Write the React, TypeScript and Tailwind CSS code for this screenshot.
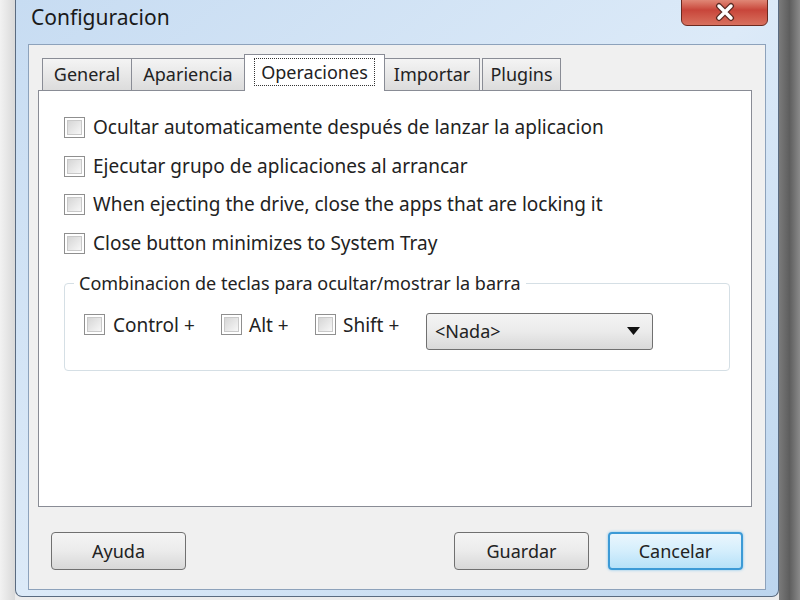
import React from "react";

const font = { fontFamily: '"Noto Sans", "Open Sans", Arial, sans-serif' };

function Check() {
  return (
    <span className="box-border inline-flex h-[21px] w-[21px] shrink-0 items-center justify-center border border-[#8f8f8f] bg-white">
      <span className="h-[15px] w-[15px] border border-[#c9c9c9] bg-gradient-to-br from-[#d6d6d6] to-[#f7f7f7]" />
    </span>
  );
}

function Row({ label }: { label: string }) {
  return (
    <div className="flex h-[38.7px] items-center gap-[8px]">
      <Check />
      <span className="text-[19px] text-[#222]">{label}</span>
    </div>
  );
}

function Btn({ label, focus }: { label: string; focus?: boolean }) {
  return (
    <div
      className={
        focus
          ? "flex h-[38px] w-[135px] items-center justify-center rounded-[4px] border-2 border-[#3c9ad6] bg-gradient-to-b from-[#eaf6fd] via-[#d4eefc] to-[#b6e1f8] text-[18px] text-[#222] shadow-[0_0_3px_#7ec3ee]"
          : "flex h-[38px] w-[135px] items-center justify-center rounded-[4px] border border-[#707070] bg-gradient-to-b from-[#f4f4f4] via-[#ebebeb] to-[#d8d8d8] text-[18px] text-[#222]"
      }
    >
      {label}
    </div>
  );
}

function Tab({ label, w }: { label: string; w: string }) {
  return (
    <div
      className={`${w} flex h-[32px] items-center justify-center border border-b-0 border-[#898c95] bg-gradient-to-b from-[#f4f4f4] to-[#dcdcdc] text-[18px] text-[#222]`}
    >
      {label}
    </div>
  );
}

export default function App() {
  return (
    <div className="flex h-[600px] w-[800px] overflow-hidden bg-[#ececec]" style={font}>
      <div className="w-[15px] shrink-0 bg-gradient-to-r from-[#f2f2f2] to-[#d9d9d9]" />
      <div className="relative flex h-[597px] w-[764px] shrink-0 flex-col rounded-b-[7px] border border-t-0 border-[#5a6b80] bg-gradient-to-br from-[#c7dcf2] via-[#dceaf8] to-[#bcd5ee]">
        <div className="flex h-[44px] shrink-0 items-center pl-[15px] pb-[8px]">
          <span className="text-[21px] text-[#1a1a1a]">Configuracion</span>
        </div>
        <div className="absolute right-[10px] top-[-6px] flex h-[32px] w-[87px] items-center justify-center rounded-b-[6px] border border-[#6b2a20] bg-gradient-to-b from-[#e9a594] via-[#c8453a] to-[#d8705e] shadow-[inset_0_1px_0_rgba(255,255,255,0.5)]">
          <svg width="22" height="20" viewBox="0 0 22 20" className="mt-[4px]">
            <path d="M5 4 L17 16 M17 4 L5 16" stroke="#5a2a22" strokeWidth="6" strokeLinecap="round" />
            <path d="M5 4 L17 16 M17 4 L5 16" stroke="#ffffff" strokeWidth="3.5" strokeLinecap="round" />
          </svg>
        </div>
        <div className="mx-[12px] flex h-[546px] flex-col border border-[#8da2bb] bg-[#f0f0f0]">
          <div className="flex flex-col pl-[9px] pr-[13px] pt-[9px]">
            <div className="relative z-10 flex items-end pl-[4px]">
              <Tab label="General" w="w-[90px]" />
              <Tab label="Apariencia" w="w-[114px] -ml-[1px]" />
              <div className="-mb-[1px] -ml-[1px] flex h-[37px] w-[141px] items-center justify-center border border-b-0 border-[#898c95] bg-white pb-[2px]">
                <span className="border border-dotted border-[#333] px-[6px] text-[18px] leading-[26px] text-[#222]">
                  Operaciones
                </span>
              </div>
              <Tab label="Importar" w="w-[96px] -ml-[1px]" />
              <Tab label="Plugins" w="w-[79px] ml-[2px]" />
            </div>
            <div className="flex h-[417px] flex-col border border-[#898c95] bg-white pl-[25px] pr-[21px] pt-[17px]">
              <Row label="Ocultar automaticamente después de lanzar la aplicacion" />
              <Row label="Ejecutar grupo de aplicaciones al arrancar" />
              <Row label="When ejecting the drive, close the apps that are locking it" />
              <Row label="Close button minimizes to System Tray" />
              <fieldset className="mt-[7px] h-[101px] rounded-[4px] border border-[#d5dfe5]">
                <legend className="ml-[9px] px-[5px] text-[18px] text-[#222]">
                  Combinacion de teclas para ocultar/mostrar la barra
                </legend>
                <div className="mt-[16px] flex items-start pl-[19px]">
                  <div className="flex h-[24px] items-center">
                    <Check />
                    <span className="ml-[8px] w-[108px] text-[19px] text-[#222]">Control +</span>
                    <Check />
                    <span className="ml-[7px] w-[66px] text-[19px] text-[#222]">Alt +</span>
                    <Check />
                    <span className="ml-[7px] w-[83px] text-[19px] text-[#222]">Shift +</span>
                  </div>
                  <div className="flex h-[37px] w-[227px] items-center justify-between rounded-[3px] border border-[#707070] bg-gradient-to-b from-[#f4f4f4] via-[#ebebeb] to-[#d9d9d9] pl-[8px] pr-[12px] text-[18px] text-[#222]">
                    <span>&lt;Nada&gt;</span>
                    <svg width="13" height="8" viewBox="0 0 13 8">
                      <path d="M0 0 H13 L6.5 8 Z" fill="#111" />
                    </svg>
                  </div>
                </div>
              </fieldset>
            </div>
          </div>
          <div className="mt-[25px] flex items-center px-[22px]">
            <Btn label="Ayuda" />
            <div className="flex-1" />
            <Btn label="Guardar" />
            <div className="w-[19px]" />
            <Btn label="Cancelar" focus />
          </div>
        </div>
      </div>
      <div className="w-[21px] shrink-0 bg-gradient-to-r from-[#7a7a7a] via-[#5e5e5e] to-[#8a8a8a]" />
    </div>
  );
}
